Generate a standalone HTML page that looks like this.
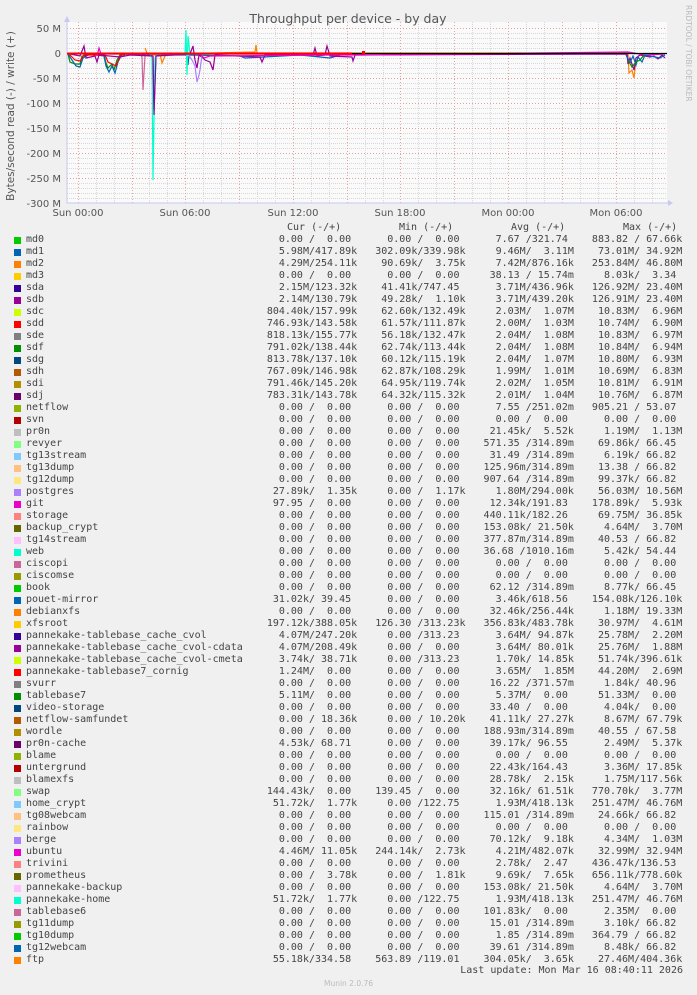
<!DOCTYPE html>
<html><head><meta charset="utf-8"><style>
body{margin:0;width:697px;height:995px;background:#f0f0f0;position:relative;overflow:hidden;font-family:"DejaVu Sans","Liberation Sans",sans-serif;}
.t{position:absolute;white-space:pre;}
#leg{position:absolute;left:26px;top:234px;font-family:"DejaVu Sans Mono","Liberation Mono",monospace;font-size:10px;line-height:12px;color:#444;white-space:pre;margin:0;}
.sq{position:absolute;left:14px;width:7px;height:7px;}
</style></head><body>
<svg width="697" height="230" style="position:absolute;left:0;top:0" font-family="DejaVu Sans, Liberation Sans, sans-serif">
<rect x="67" y="22" width="600" height="181" fill="#fafafa"/>
<g stroke="#d8d8d8" stroke-width="1" stroke-dasharray="1,1">
<path d="M67 33.5H667M67 38.5H667M67 43.5H667M67 48.5H667M67 58.5H667M67 63.5H667M67 68.5H667M67 73.5H667M67 83.5H667M67 88.5H667M67 93.5H667M67 98.5H667M67 108.5H667M67 113.5H667M67 118.5H667M67 123.5H667M67 133.5H667M67 138.5H667M67 143.5H667M67 148.5H667M67 158.5H667M67 163.5H667M67 168.5H667M67 173.5H667M67 183.5H667M67 188.5H667M67 193.5H667M67 198.5H667"/>
<path d="M96.5 22V203M114.5 22V203M149.5 22V203M167.5 22V203M203.5 22V203M221.5 22V203M257.5 22V203M275.5 22V203M311.5 22V203M329.5 22V203M365.5 22V203M383.5 22V203M418.5 22V203M436.5 22V203M472.5 22V203M490.5 22V203M526.5 22V203M544.5 22V203M580.5 22V203M598.5 22V203M634.5 22V203M652.5 22V203"/>
</g>
<g stroke="#e3a0a0" stroke-width="1" stroke-dasharray="1,2">
<path d="M67 28.5H667M67 78.5H667M67 103.5H667M67 128.5H667M67 153.5H667M67 178.5H667"/>
<path d="M78.5 22V203M132.5 22V203M185.5 22V203M239.5 22V203M293.5 22V203M347.5 22V203M400.5 22V203M454.5 22V203M508.5 22V203M562.5 22V203M616.5 22V203"/>
</g>
<path d="M67 18V203H669" stroke="#c8c8f0" fill="none"/>
<path d="M64 22L67 16L70 22Z M668 200L673 203L668 206Z" fill="#c8c8f0"/>
<g fill="none" stroke-width="1.2">
<polyline stroke="#008F00" points="68,54 70,62 75,64 80,64 82,56 86,56 90,54 104,55 106,63 108,68 112,64 114,70 117,60 120,55 125,55"/>
<polyline stroke="#0066B3" points="68,54 72,60 76,66 80,67 83,58 90,54 104,56 106,66 109,72 112,66 115,73 118,62 122,54 150,55 153,56 154,110 156,55 187,55 188,65 189,55 240,56 245,58 300,55 330,58 340,55"/>
<polyline stroke="#FF0000" points="68,53 75,60 80,61 84,55 105,55 108,62 112,64 116,66 120,56 125,54 365,54"/>
<polyline stroke="#FF8000" points="145,48 147,53 155,55 160,54 162,63 165,56 170,54 255,52 256,45 257,53 300,53 628,53 629,73 632,70 634,78 636,60"/>
<polyline stroke="#00FFCC" points="150,54 152,58 153,180 155,58 157,54 185,54 186,30 187,75 188,36 190,54 310,54"/>
<polyline stroke="#CC6699" points="140,54 142,57 143,90 145,56 147,54"/>
<polyline stroke="#990099" points="70,54 80,56 84,46 86,58 95,56 97,62 99,55 120,57 130,55 153,56 154,115 156,56 190,54 193,46 195,60 197,68 199,55 203,58 205,60 210,62 213,70 215,55 260,57 262,62 265,55 305,55 313,55 315,48 317,56 325,55 327,46 330,56 352,57 353,61 355,55 627,54 628,64 630,58 634,70 636,58 640,55 650,57 654,56 658,59 662,55 665,58"/>
<polyline stroke="#AA80FF" points="188,54 192,60 195,66 197,82 199,75 200,70 202,55"/>
<polyline stroke="#EE00CC" points="97,56 99,48 101,54 200,54 204,58 210,56 330,55 360,55 628,52 645,55 665,54"/>
<polyline stroke="#0066B3" points="626,55 630,63 633,56 636,65 638,57 642,62 645,55 660,58 665,55"/>
<polyline stroke="#008F00" points="628,60 632,67 636,62 640,60 644,55"/>
</g>
<path d="M67 53.5H667" stroke="#000" stroke-width="1.2"/>
<path d="M67 53.5H352" stroke="#FF0000" stroke-width="2"/>
<rect x="362" y="51" width="3" height="3" fill="#f00"/>
<g font-size="10" fill="#555" text-anchor="end">
<text x="61" y="32">50 M</text><text x="61" y="57">0</text><text x="61" y="82">-50 M</text><text x="61" y="107">-100 M</text><text x="61" y="132">-150 M</text><text x="61" y="157">-200 M</text><text x="61" y="182">-250 M</text><text x="61" y="207">-300 M</text>
</g>
<g font-size="10" fill="#555" text-anchor="middle">
<text x="78" y="216">Sun 00:00</text><text x="185" y="216">Sun 06:00</text><text x="293" y="216">Sun 12:00</text><text x="400" y="216">Sun 18:00</text><text x="508" y="216">Mon 00:00</text><text x="616" y="216">Mon 06:00</text>
</g>
<text x="348" y="23" font-size="12.5" fill="#555" text-anchor="middle">Throughput per device - by day</text>
<text transform="translate(14,116) rotate(-90)" font-size="10.5" fill="#555" text-anchor="middle">Bytes/second read (-) / write (+)</text>
<text transform="translate(686,5) rotate(90)" font-size="7.5" fill="#bbb">RRDTOOL / TOBI OETIKER</text>
</svg>
<div class="t" style="left:287px;top:222px;font-family:'DejaVu Sans Mono',monospace;font-size:10px;color:#444">Cur (-/+)</div>
<div class="t" style="left:399px;top:222px;font-family:'DejaVu Sans Mono',monospace;font-size:10px;color:#444">Min (-/+)</div>
<div class="t" style="left:511px;top:222px;font-family:'DejaVu Sans Mono',monospace;font-size:10px;color:#444">Avg (-/+)</div>
<div class="t" style="left:623px;top:222px;font-family:'DejaVu Sans Mono',monospace;font-size:10px;color:#444">Max (-/+)</div>
<div id="sq"></div>
<pre id="leg">md0                                       0.00 /  0.00      0.00 /  0.00      7.67 /321.74    883.82 / 67.66k
md1                                       5.98M/417.89k   302.09k/339.98k     9.46M/  3.11M    73.01M/ 34.92M
md2                                       4.29M/254.11k    90.69k/  3.75k     7.42M/876.16k   253.84M/ 46.80M
md3                                       0.00 /  0.00      0.00 /  0.00     38.13 / 15.74m     8.03k/  3.34
sda                                       2.15M/123.32k    41.41k/747.45      3.71M/436.96k   126.92M/ 23.40M
sdb                                       2.14M/130.79k    49.28k/  1.10k     3.71M/439.20k   126.91M/ 23.40M
sdc                                     804.40k/157.99k    62.60k/132.49k     2.03M/  1.07M    10.83M/  6.96M
sdd                                     746.93k/143.58k    61.57k/111.87k     2.00M/  1.03M    10.74M/  6.90M
sde                                     818.13k/155.77k    56.18k/132.47k     2.04M/  1.08M    10.83M/  6.97M
sdf                                     791.02k/138.44k    62.74k/113.44k     2.04M/  1.08M    10.84M/  6.94M
sdg                                     813.78k/137.10k    60.12k/115.19k     2.04M/  1.07M    10.80M/  6.93M
sdh                                     767.09k/146.98k    62.87k/108.29k     1.99M/  1.01M    10.69M/  6.83M
sdi                                     791.46k/145.20k    64.95k/119.74k     2.02M/  1.05M    10.81M/  6.91M
sdj                                     783.31k/143.78k    64.32k/115.32k     2.01M/  1.04M    10.76M/  6.87M
netflow                                   0.00 /  0.00      0.00 /  0.00      7.55 /251.02m   905.21 / 53.07
svn                                       0.00 /  0.00      0.00 /  0.00      0.00 /  0.00      0.00 /  0.00
pr0n                                      0.00 /  0.00      0.00 /  0.00     21.45k/  5.52k     1.19M/  1.13M
revyer                                    0.00 /  0.00      0.00 /  0.00    571.35 /314.89m    69.86k/ 66.45
tg13stream                                0.00 /  0.00      0.00 /  0.00     31.49 /314.89m     6.19k/ 66.82
tg13dump                                  0.00 /  0.00      0.00 /  0.00    125.96m/314.89m    13.38 / 66.82
tg12dump                                  0.00 /  0.00      0.00 /  0.00    907.64 /314.89m    99.37k/ 66.82
postgres                                 27.89k/  1.35k     0.00 /  1.17k     1.80M/294.00k    56.03M/ 10.56M
git                                      97.95 /  0.00      0.00 /  0.00     12.34k/191.83    178.89k/  5.93k
storage                                   0.00 /  0.00      0.00 /  0.00    440.11k/182.26     69.75M/ 36.85k
backup_crypt                              0.00 /  0.00      0.00 /  0.00    153.08k/ 21.50k     4.64M/  3.70M
tg14stream                                0.00 /  0.00      0.00 /  0.00    377.87m/314.89m    40.53 / 66.82
web                                       0.00 /  0.00      0.00 /  0.00    36.68 /1010.16m     5.42k/ 54.44
ciscopi                                   0.00 /  0.00      0.00 /  0.00      0.00 /  0.00      0.00 /  0.00
ciscomse                                  0.00 /  0.00      0.00 /  0.00      0.00 /  0.00      0.00 /  0.00
book                                      0.00 /  0.00      0.00 /  0.00     62.12 /314.89m     8.77k/ 66.45
pouet-mirror                             31.02k/ 39.45      0.00 /  0.00      3.46k/618.56    154.08k/126.10k
debianxfs                                 0.00 /  0.00      0.00 /  0.00     32.46k/256.44k     1.18M/ 19.33M
xfsroot                                 197.12k/388.05k   126.30 /313.23k   356.83k/483.78k    30.97M/  4.61M
pannekake-tablebase_cache_cvol            4.07M/247.20k     0.00 /313.23      3.64M/ 94.87k    25.78M/  2.20M
pannekake-tablebase_cache_cvol-cdata      4.07M/208.49k     0.00 /  0.00      3.64M/ 80.01k    25.76M/  1.88M
pannekake-tablebase_cache_cvol-cmeta      3.74k/ 38.71k     0.00 /313.23      1.70k/ 14.85k    51.74k/396.61k
pannekake-tablebase7_cornig               1.24M/  0.00      0.00 /  0.00      3.65M/  1.85M    44.20M/  2.69M
svurr                                     0.00 /  0.00      0.00 /  0.00     16.22 /371.57m     1.84k/ 40.96
tablebase7                                5.11M/  0.00      0.00 /  0.00      5.37M/  0.00     51.33M/  0.00
video-storage                             0.00 /  0.00      0.00 /  0.00     33.40 /  0.00      4.04k/  0.00
netflow-samfundet                         0.00 / 18.36k     0.00 / 10.20k    41.11k/ 27.27k     8.67M/ 67.79k
wordle                                    0.00 /  0.00      0.00 /  0.00    188.93m/314.89m    40.55 / 67.58
pr0n-cache                                4.53k/ 68.71      0.00 /  0.00     39.17k/ 96.55      2.49M/  5.37k
blame                                     0.00 /  0.00      0.00 /  0.00      0.00 /  0.00      0.00 /  0.00
untergrund                                0.00 /  0.00      0.00 /  0.00     22.43k/164.43      3.36M/ 17.85k
blamexfs                                  0.00 /  0.00      0.00 /  0.00     28.78k/  2.15k     1.75M/117.56k
swap                                    144.43k/  0.00    139.45 /  0.00     32.16k/ 61.51k   770.70k/  3.77M
home_crypt                               51.72k/  1.77k     0.00 /122.75      1.93M/418.13k   251.47M/ 46.76M
tg08webcam                                0.00 /  0.00      0.00 /  0.00    115.01 /314.89m    24.66k/ 66.82
rainbow                                   0.00 /  0.00      0.00 /  0.00      0.00 /  0.00      0.00 /  0.00
berge                                     0.00 /  0.00      0.00 /  0.00     70.12k/  9.18k     4.34M/  1.03M
ubuntu                                    4.46M/ 11.05k   244.14k/  2.73k     4.21M/482.07k    32.99M/ 32.94M
trivini                                   0.00 /  0.00      0.00 /  0.00      2.78k/  2.47    436.47k/136.53
prometheus                                0.00 /  3.78k     0.00 /  1.81k     9.69k/  7.65k   656.11k/778.60k
pannekake-backup                          0.00 /  0.00      0.00 /  0.00    153.08k/ 21.50k     4.64M/  3.70M
pannekake-home                           51.72k/  1.77k     0.00 /122.75      1.93M/418.13k   251.47M/ 46.76M
tablebase6                                0.00 /  0.00      0.00 /  0.00    101.83k/  0.00      2.35M/  0.00
tg11dump                                  0.00 /  0.00      0.00 /  0.00     15.01 /314.89m     3.10k/ 66.82
tg10dump                                  0.00 /  0.00      0.00 /  0.00      1.85 /314.89m   364.79 / 66.82
tg12webcam                                0.00 /  0.00      0.00 /  0.00     39.61 /314.89m     8.48k/ 66.82
ftp                                      55.18k/334.58    563.89 /119.01    304.05k/  3.65k    27.46M/404.36k</pre>
<svg width="22" height="740" style="position:absolute;left:0;top:234px">
<g>
<rect x="14" y="3" width="7" height="7" fill="#00CC00"/><rect x="14" y="15" width="7" height="7" fill="#0066B3"/><rect x="14" y="27" width="7" height="7" fill="#FF8000"/><rect x="14" y="39" width="7" height="7" fill="#FFCC00"/><rect x="14" y="51" width="7" height="7" fill="#330099"/><rect x="14" y="63" width="7" height="7" fill="#990099"/><rect x="14" y="75" width="7" height="7" fill="#CCFF00"/><rect x="14" y="87" width="7" height="7" fill="#FF0000"/><rect x="14" y="99" width="7" height="7" fill="#808080"/><rect x="14" y="111" width="7" height="7" fill="#008F00"/><rect x="14" y="123" width="7" height="7" fill="#00487D"/><rect x="14" y="135" width="7" height="7" fill="#B35A00"/><rect x="14" y="147" width="7" height="7" fill="#B38F00"/><rect x="14" y="159" width="7" height="7" fill="#6B006B"/><rect x="14" y="171" width="7" height="7" fill="#8FB300"/><rect x="14" y="183" width="7" height="7" fill="#B30000"/><rect x="14" y="195" width="7" height="7" fill="#BEBEBE"/><rect x="14" y="207" width="7" height="7" fill="#80FF80"/><rect x="14" y="219" width="7" height="7" fill="#80C9FF"/><rect x="14" y="231" width="7" height="7" fill="#FFC080"/><rect x="14" y="243" width="7" height="7" fill="#FFE680"/><rect x="14" y="255" width="7" height="7" fill="#AA80FF"/><rect x="14" y="267" width="7" height="7" fill="#EE00CC"/><rect x="14" y="279" width="7" height="7" fill="#FF8080"/><rect x="14" y="291" width="7" height="7" fill="#666600"/><rect x="14" y="303" width="7" height="7" fill="#FFBFFF"/><rect x="14" y="315" width="7" height="7" fill="#00FFCC"/><rect x="14" y="327" width="7" height="7" fill="#CC6699"/><rect x="14" y="339" width="7" height="7" fill="#999900"/>
<rect x="14" y="351" width="7" height="7" fill="#00CC00"/><rect x="14" y="363" width="7" height="7" fill="#0066B3"/><rect x="14" y="375" width="7" height="7" fill="#FF8000"/><rect x="14" y="387" width="7" height="7" fill="#FFCC00"/><rect x="14" y="399" width="7" height="7" fill="#330099"/><rect x="14" y="411" width="7" height="7" fill="#990099"/><rect x="14" y="423" width="7" height="7" fill="#CCFF00"/><rect x="14" y="435" width="7" height="7" fill="#FF0000"/><rect x="14" y="447" width="7" height="7" fill="#808080"/><rect x="14" y="459" width="7" height="7" fill="#008F00"/><rect x="14" y="471" width="7" height="7" fill="#00487D"/><rect x="14" y="483" width="7" height="7" fill="#B35A00"/><rect x="14" y="495" width="7" height="7" fill="#B38F00"/><rect x="14" y="507" width="7" height="7" fill="#6B006B"/><rect x="14" y="519" width="7" height="7" fill="#8FB300"/><rect x="14" y="531" width="7" height="7" fill="#B30000"/><rect x="14" y="543" width="7" height="7" fill="#BEBEBE"/><rect x="14" y="555" width="7" height="7" fill="#80FF80"/><rect x="14" y="567" width="7" height="7" fill="#80C9FF"/><rect x="14" y="579" width="7" height="7" fill="#FFC080"/><rect x="14" y="591" width="7" height="7" fill="#FFE680"/><rect x="14" y="603" width="7" height="7" fill="#AA80FF"/><rect x="14" y="615" width="7" height="7" fill="#EE00CC"/><rect x="14" y="627" width="7" height="7" fill="#FF8080"/><rect x="14" y="639" width="7" height="7" fill="#666600"/><rect x="14" y="651" width="7" height="7" fill="#FFBFFF"/><rect x="14" y="663" width="7" height="7" fill="#00FFCC"/><rect x="14" y="675" width="7" height="7" fill="#CC6699"/><rect x="14" y="687" width="7" height="7" fill="#999900"/>
<rect x="14" y="699" width="7" height="7" fill="#00CC00"/><rect x="14" y="711" width="7" height="7" fill="#0066B3"/><rect x="14" y="723" width="7" height="7" fill="#FF8000"/>
</g></svg>
<div class="t" style="right:14px;top:965px;font-family:'DejaVu Sans Mono',monospace;font-size:10px;color:#444">Last update: Mon Mar 16 08:40:11 2026</div>
<div class="t" style="left:0;width:697px;text-align:center;top:979px;font-size:7.5px;color:#bbb">Munin 2.0.76</div>
</body></html>
